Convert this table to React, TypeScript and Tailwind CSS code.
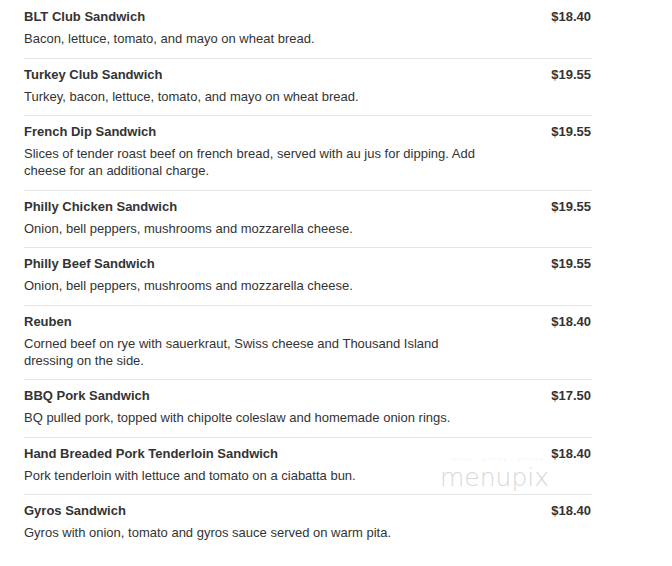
interface IMenuItem {
  name: string;
  description: string;
  price: string;
}

const items: IMenuItem[] = [
  { name: 'BLT Club Sandwich', description: 'Bacon, lettuce, tomato, and mayo on wheat bread.', price: '$18.40' },
  { name: 'Turkey Club Sandwich', description: 'Turkey, bacon, lettuce, tomato, and mayo on wheat bread.', price: '$19.55' },
  {
    name: 'French Dip Sandwich',
    description:
      'Slices of tender roast beef on french bread, served with au jus for dipping. Add cheese for an additional charge.',
    price: '$19.55',
  },
  { name: 'Philly Chicken Sandwich', description: 'Onion, bell peppers, mushrooms and mozzarella cheese.', price: '$19.55' },
  { name: 'Philly Beef Sandwich', description: 'Onion, bell peppers, mushrooms and mozzarella cheese.', price: '$19.55' },
  {
    name: 'Reuben',
    description: 'Corned beef on rye with sauerkraut, Swiss cheese and Thousand Island dressing on the side.',
    price: '$18.40',
  },
  {
    name: 'BBQ Pork Sandwich',
    description: 'BQ pulled pork, topped with chipolte coleslaw and homemade onion rings.',
    price: '$17.50',
  },
  {
    name: 'Hand Breaded Pork Tenderloin Sandwich',
    description: 'Pork tenderloin with lettuce and tomato on a ciabatta bun.',
    price: '$18.40',
  },
  { name: 'Gyros Sandwich', description: 'Gyros with onion, tomato and gyros sauce served on warm pita.', price: '$18.40' },
];

const MenuRow = ({ item, first }: { item: IMenuItem; first: boolean }) => {
  return (
    <div className={`flex justify-between pt-[7px] pb-[10.5px] ${first ? '' : 'border-t border-[#e6e6e6]'}`}>
      <div className="w-[460px]">
        {/* 메뉴 이름 */}
        <h3 className="text-[13px] leading-[18px] font-bold text-[#333]">{item.name}</h3>
        {/* 설명 */}
        <p className="mt-1 text-[13px] leading-[17px] text-[#333]">{item.description}</p>
      </div>
      <span className="text-[13px] leading-[18px] font-bold text-[#333] pr-px">{item.price}</span>
    </div>
  );
};

export default function App() {
  return (
    <div className="relative w-[672px] h-[566px] bg-white overflow-hidden font-['Liberation_Sans',Arial,sans-serif]">
      <div className="ml-6 w-[568px] pt-px">
        {items.map((item, i) => (
          <MenuRow key={item.name} item={item} first={i === 0} />
        ))}
      </div>

      {/* 워터마크 */}
      <div className="absolute left-[440px] top-[456px] pointer-events-none select-none">
        <div className="text-[6px] leading-[7px] tracking-[1.5px] text-[#f4f4f4] pl-3">menu · prices · photos</div>
        <div className="text-[25px] leading-[30px] font-['DejaVu_Sans',sans-serif] font-extralight text-[#d8d8d8]">
          menupix
        </div>
      </div>
    </div>
  );
}
